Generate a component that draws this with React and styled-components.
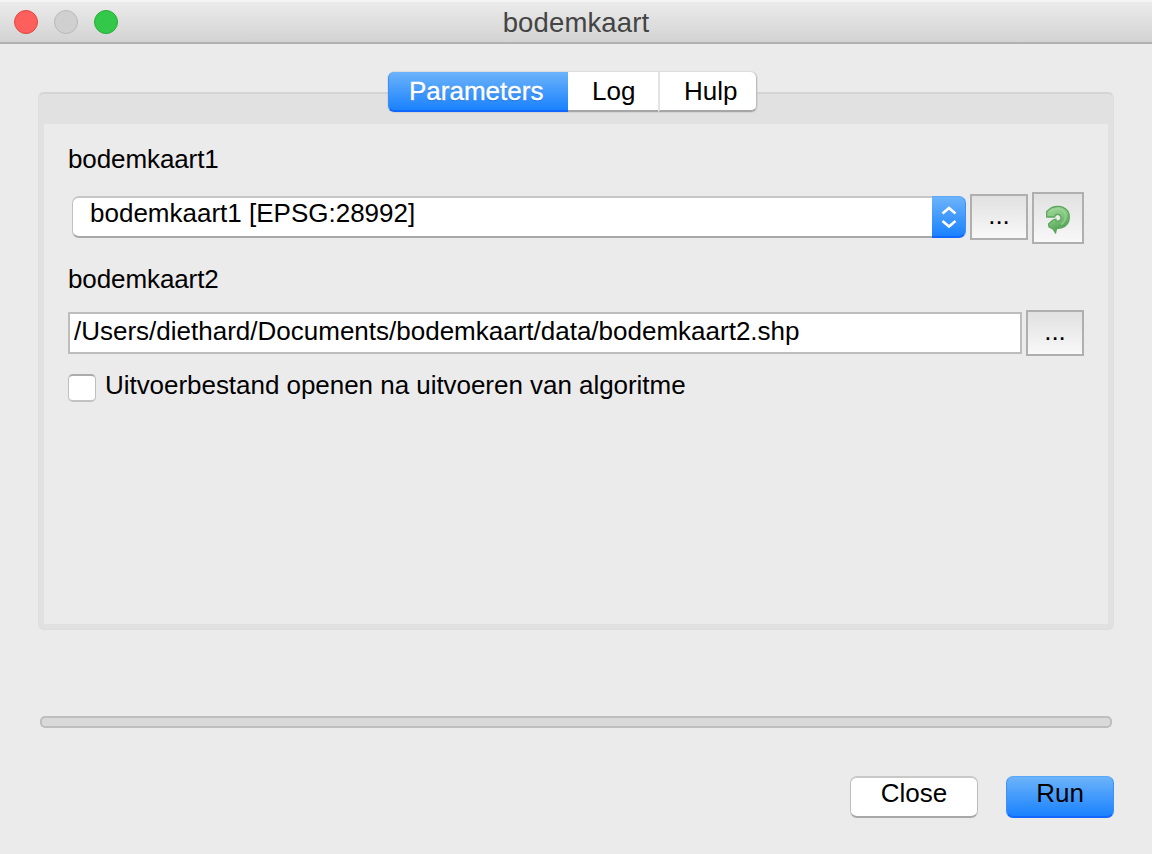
import React from "react";
import styled, { createGlobalStyle, css } from "styled-components";

const GlobalStyle = createGlobalStyle`
  * { box-sizing: border-box; }
  body {
    margin: 0;
    background: #ebebeb;
    color: #000;
    font: 26px/30px "Liberation Sans", Helvetica, Arial, sans-serif;
  }
  button, input { font: inherit; color: inherit; margin: 0; }
`;

const Window = styled.div`
  width: 1152px;
  height: 854px;
  display: flex;
  flex-direction: column;
  background: #ebebeb;
  overflow: hidden;
`;

const TitleBar = styled.header`
  height: 44px;
  flex: none;
  display: grid;
  grid-template-columns: 1fr auto 1fr;
  border-top: 2px solid #f5f5f5;
  border-bottom: 2px solid #b1b1b1;
  background: linear-gradient(#ebebeb, #d3d3d3);
`;

const Lights = styled.div`
  display: flex;
  gap: 16px;
  padding: 8px 0 0 14px;
`;

const Light = styled.span`
  width: 24px;
  height: 24px;
  border-radius: 50%;
  background: ${(p) => p.$fill};
  border: 1.5px solid ${(p) => p.$edge};
`;

const Title = styled.h1`
  margin: 0;
  padding-top: 6px;
  font-size: 27.5px;
  line-height: 30px;
  font-weight: 400;
  letter-spacing: 0.15px;
  color: #444;
`;

const Content = styled.main`
  flex: 1;
  display: flex;
  flex-direction: column;
  padding: 28px 38px 36px;
`;

const Tabs = styled.nav`
  align-self: center;
  display: flex;
  height: 40px;
  margin: 0 7px -20px 0;
  z-index: 1;
  border-radius: 6px;
  box-shadow: 0 0 0 1px rgba(0, 0, 0, 0.06);
`;

const blueFill = css`
  background: linear-gradient(#6cb3fa, #1a82fe);
  border: solid;
  border-width: 1px 1px 2px;
  border-color: #5ca8f8 #3a8ffb #1267ff;
`;

const Tab = styled.button`
  width: ${(p) => p.$width}px;
  height: 40px;
  padding: 4px 0 0 ${(p) => p.$inset}px;
  line-height: 30px;
  display: flex;
  background: #fff;
  border: 0 solid #a6a6a6;
  border-bottom-width: 2px;
  & + & + & {
    border-left: 2px solid #e3e3e3;
    border-right: 1px solid #bdbdbd;
    border-radius: 0 6px 6px 0;
  }
  ${(p) =>
    p.$active &&
    css`
      ${blueFill}
      border-width: 0 0 2px 1px;
      border-radius: 6px 0 0 6px;
      color: #fff;
      -webkit-text-stroke: 0.4px #fff;
      text-shadow: 0 1px 1px rgba(0, 40, 120, 0.35);
    `}
`;

const PanelFrame = styled.div`
  border-radius: 6px;
  background: #e1e1e1;
  height: 538px;
  padding: 30px 5px 5px;
  border: 1px solid #dedede;
  border-top: 2px solid #d4d4d4;
`;

const PanelBody = styled.div`
  height: 500px;
  padding: 20px 24px 0;
  background: #ebebeb;
`;

const Label = styled.label`
  display: block;
  height: 30px;
  letter-spacing: -0.1px;
`;

const Row = styled.div`
  display: flex;
  align-items: center;
`;

const SourceRow = styled(Row)`
  height: 52px;
  margin: 18px 0 20px;
  padding-left: 4px;
`;

const TargetRow = styled(Row)`
  height: 46px;
  margin-top: 16px;
  gap: 4px;
`;

const Select = styled.div`
  width: 894px;
  height: 42px;
  margin: 0 4px 2px 0;
  display: flex;
`;

const SelectValue = styled.span`
  flex: 1;
  padding: 0 0 0 17px;
  background: #fff;
  border: solid;
  border-width: 2px 0 2px 1px;
  border-color: #c6c6c6 #c0c0c0 #a8a8a8;
  border-radius: 7px 0 0 7px;
`;

const SelectArrows = styled.span`
  ${blueFill}
  width: 34px;
  border-left: 0;
  border-radius: 0 7px 7px 0;
  display: flex;
  justify-content: center;
  align-items: center;
`;

const ToolButton = styled.button`
  width: ${(p) => p.$width || 58}px;
  height: ${(p) => p.$height || 46}px;
  padding: 0;
  flex: none;
  display: flex;
  justify-content: center;
  align-items: center;
  background: linear-gradient(#e1e1e1, #f8f8f8);
  border: 2px solid #afafaf;
`;

const BrowseButton = styled(ToolButton)`
  padding-bottom: 5px;
  margin-bottom: ${(p) => p.$lift || 0}px;
`;

const ReloadButton = styled(ToolButton)`
  margin-left: 4px;
`;

const PathInput = styled.input`
  width: 954px;
  height: 42px;
  padding: 0 4px 4px;
  border: 2px solid #bdbdbd;
  border-radius: 0;
  background: #fff;
  outline: 0;
`;

const CheckRow = styled.label`
  display: flex;
  margin-top: 14px;
  gap: 9px;
  letter-spacing: -0.04px;
`;

const Checkbox = styled.span`
  width: 28px;
  height: 28px;
  margin-top: 4px;
  background: #fff;
  border: solid;
  border-width: 2px 1.5px;
  border-color: #acacac #bebebe #c3c3c3;
  border-radius: 5px;
`;

const Progress = styled.div`
  height: 12px;
  flex: none;
  margin: 86px 2px 48px;
  border: 2px solid #bebebe;
  border-radius: 5px;
  background: #d9d9d9;
`;

const Actions = styled.footer`
  display: flex;
  justify-content: flex-end;
  gap: 28px;
`;

const PushButton = styled.button`
  width: ${(p) => p.$width}px;
  height: 42px;
  padding: 0;
  display: flex;
  justify-content: center;
  line-height: 30px;
  background: #fff;
  border: solid;
  border-width: 2px 1.5px;
  border-color: #c8c8c8 #bdbdbd #a8a8a8;
  border-radius: 7px;
  ${(p) =>
    p.$primary &&
    css`
      ${blueFill}
      padding-top: 1px;
    `}
`;

const ChevronIcon = () => (
  <svg width="18" height="27" viewBox="0 0 18 27" fill="none" stroke="#fff" strokeWidth="2.5">
    <path d="M2.500 10.500 9 5l6.500 5.500M2.500 18 9 23.500l6.500-5.500" />
  </svg>
);

const ReloadIcon = () => (
  <svg width="28" height="32" viewBox="0 0 28 32">
    <defs>
      <linearGradient id="leaf" x1="0" y1="0" x2="0.4" y2="1">
        <stop offset="0" stopColor="#a2d59a" />
        <stop offset="0.55" stopColor="#7fc47c" />
        <stop offset="1" stopColor="#4c9c51" />
      </linearGradient>
    </defs>
    <path
      d="M2.700 9.500 7 6C10 4.200 16 4 19 5.300c4 1.700 6.300 5.200 6.300 9.700 0 5.500-3 9.500-8 10.800l-4.800.7-1 4.500-2.500-4-4-2-.5-3 4.500-4 3-1V19c3 .5 5-.7 5-3 0-2.500-2-4-4.200-3.500-1.300.3-2 1-2.100 2.500H2.700z"
      fill="url(#leaf)"
      stroke="#5aa75b"
      strokeWidth="1.300"
      strokeLinejoin="round"
    />
    <path
      d="M6 9.500C10 6.500 16 6 19.500 9c4 4 2 11-2.500 13.500"
      fill="none"
      stroke="#a5d89d"
      strokeWidth="1.800"
      opacity="0.6"
    />
  </svg>
);

export default function App() {
  return (
    <>
      <GlobalStyle />
      <Window>
        <TitleBar>
          <Lights>
            <Light $fill="#fd605c" $edge="#e2463f" />
            <Light $fill="#d0d0d0" $edge="#b9b9b9" />
            <Light $fill="#34c84a" $edge="#24ac37" />
          </Lights>
          <Title>bodemkaart</Title>
        </TitleBar>
        <Content>
          <Tabs>
            <Tab $active $width={180} $inset={20}>Parameters</Tab>
            <Tab $width={90} $inset={24}>Log</Tab>
            <Tab $width={99} $inset={24}>Hulp</Tab>
          </Tabs>
          <PanelFrame>
            <PanelBody>
              <Label>bodemkaart1</Label>
              <SourceRow>
                <Select>
                  <SelectValue>bodemkaart1 [EPSG:28992]</SelectValue>
                  <SelectArrows><ChevronIcon /></SelectArrows>
                </Select>
                <BrowseButton $lift={2}>...</BrowseButton>
                <ReloadButton $width={52} $height={52}><ReloadIcon /></ReloadButton>
              </SourceRow>
              <Label>bodemkaart2</Label>
              <TargetRow>
                <PathInput readOnly value="/Users/diethard/Documents/bodemkaart/data/bodemkaart2.shp" />
                <BrowseButton>...</BrowseButton>
              </TargetRow>
              <CheckRow>
                <Checkbox />
                <span>Uitvoerbestand openen na uitvoeren van algoritme</span>
              </CheckRow>
            </PanelBody>
          </PanelFrame>
          <Progress />
          <Actions>
            <PushButton $width={128}>Close</PushButton>
            <PushButton $width={108} $primary>Run</PushButton>
          </Actions>
        </Content>
      </Window>
    </>
  );
}
